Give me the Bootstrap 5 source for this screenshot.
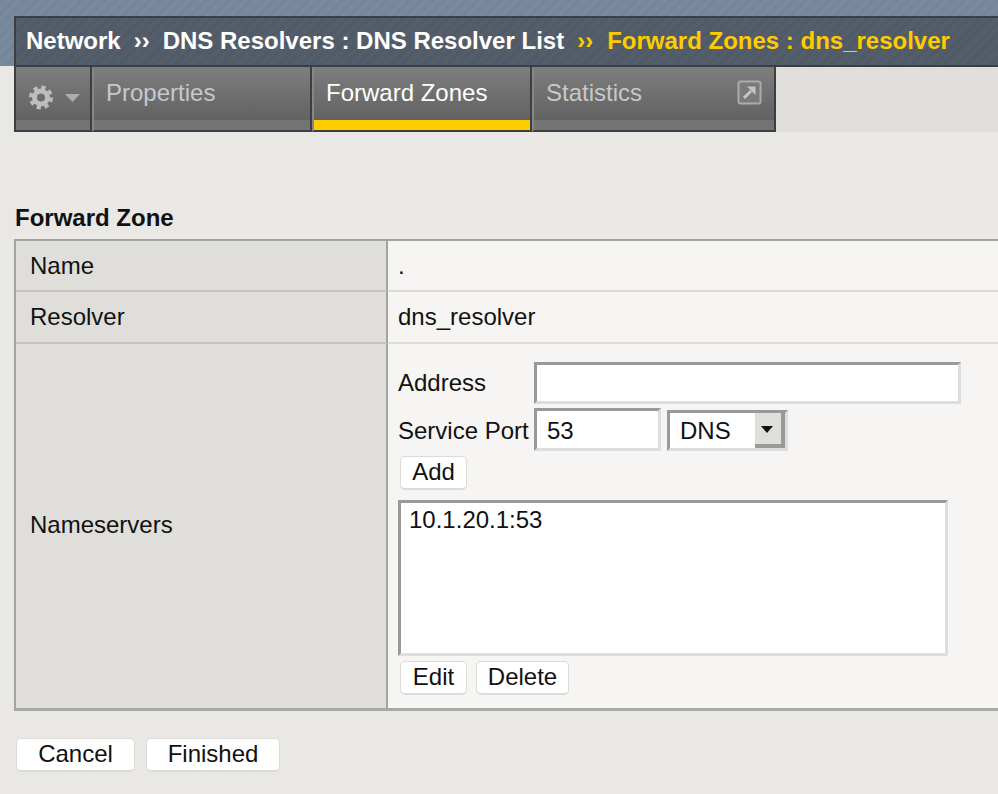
<!DOCTYPE html>
<html lang="en"><head><meta charset="utf-8"><title>Forward Zone</title>
<link href="https://cdn.jsdelivr.net/npm/bootstrap@5.3.0/dist/css/bootstrap.min.css" rel="stylesheet">
<style>
html,body{height:794px;overflow:hidden}
body{background:#e9e8e4;font-family:"Liberation Sans",Arial,sans-serif;font-size:24px;color:#111;line-height:1.2}
.topband{height:66px;padding-top:16px;padding-left:14px;background:repeating-linear-gradient(135deg,#76869a 0 4px,#7a8a9d 4px 8px)}
.crumbs{height:51px;background:repeating-linear-gradient(135deg,#515b67 0 4px,#545e6a 4px 8px);border:2px solid #3b3e42;border-right:0;padding-left:10px;color:#fff;font-weight:700;white-space:nowrap;padding-top:9px}
.sep{margin:0 13px}
.sep.cur{margin-right:14px}
.cur{color:#fc0}
.tabrow{height:65px;margin:1px 0 0 14px;background:#dfdeda}
.tabcell{height:65px;background:linear-gradient(#7e7e7e,#626262 53px,#747474 53px);border-right:2px solid #3b3e42;border-bottom:2px solid #3b3e42;border-left:2px solid #878787;color:#c8c8c8;padding:12px 0 0 12px;position:relative}
.tabgear{width:78px;border-left:2px solid #3b3e42;padding:18px 0 0 13px}
.tab-a{width:220px}
.tab-b{width:220px;color:#fff;background:linear-gradient(#7e7e7e,#626262 53px,#fc0 53px)}
.tab-c{width:244px}
.extico{position:absolute;right:12px;top:13px}
.formtitle{font-weight:700;margin:72px 0 0 15px;height:35px}
.gridbox{margin-left:14px;border-top:2px solid #a3a3a0;border-left:2px solid #a3a3a0;border-bottom:3px solid #a8a8a4}
.lab{width:372px;flex:none;background:#dfdeda;border-right:2px solid #a3a3a0;border-bottom:2px solid #c4c3bf;padding-left:14px}
.val{flex:1;background:#f6f5f3;border-bottom:2px solid #dddcd8;padding-left:10px}
.h-a{height:51px;line-height:49px}
.h-b{height:52px;line-height:49px}
.h-c{height:364px}
.h-c .lab,.h-c .val{border-bottom:0}
.h-c .lab{padding-bottom:2px}
.val-c{padding-top:18px;line-height:1.2}
.insetbox{border:3px solid;border-color:#999 #ddd #ddd #999;background:#fff;border-radius:0;color:#111;font:inherit;box-shadow:none;outline:0;display:block}
.in-addr{width:427px;height:42px;padding:0 10px}
.in-port{width:127px;height:43px;padding:2px 10px 0}
.selbox{width:121px;height:41px;padding-left:10px;line-height:35px;margin-left:6px;margin-top:2px}
.selarrow{width:30px;height:100%;background:#dfdeda;margin-left:auto;position:relative;border-right:4px solid #999;border-bottom:4px solid #999}
.selarrow::after{content:"";position:absolute;left:6px;top:13px;border:6px solid transparent;border-top:7px solid #111;border-bottom:0}
.lbl-addr{width:136px;line-height:42px}
.lbl-port{width:136px;height:43px;line-height:45px;white-space:nowrap}
.fbtn{background:#fff;border:1px solid #dcdbd7;border-bottom-width:2px;border-radius:5px;color:#111;font-size:24px;line-height:1;padding:0 0 2px;height:34px;display:inline-flex;align-items:center;justify-content:center}
.fbtn:hover{background:#fff;color:#111;border-color:#dcdbd7}
.b-add,.b-edit{width:67px}
.b-del{width:93px;margin-left:9px}
.b-add{margin:5px 0 0 2px}
.listbox{width:550px;height:156px;margin-top:10px;padding:3px 8px}
.b-row{margin:5px 0 0 2px}
.footbtns{margin:27px 0 0 16px}
.b-can{width:119px}
.b-fin{width:134px;margin-left:11px}
.caretico{margin:9px 0 0 4px}
</style></head><body>
<div class="topband"><div class="crumbs">Network<span class="sep">››</span>DNS Resolvers : DNS Resolver List<span class="sep cur">››</span><span class="cur">Forward Zones : dns_resolver</span></div></div>
<div class="tabrow d-flex">
 <div class="tabcell tabgear d-flex align-items-start gap-2">
  <svg width="24" height="25" viewBox="0 0 24 24"><circle cx="12" cy="12" r="6.500" fill="none" stroke="#bdbdbd" stroke-width="5"/><circle cx="12" cy="12" r="10" fill="none" stroke="#bdbdbd" stroke-width="4" stroke-dasharray="4.2 3.65"/></svg>
  <svg class="caretico" width="15" height="8" viewBox="0 0 15 8"><path d="M0 0h15L7.500 8z" fill="#adadad"/></svg>
 </div>
 <div class="tabcell tab-a">Properties</div>
 <div class="tabcell tab-b">Forward Zones</div>
 <div class="tabcell tab-c">Statistics
  <svg class="extico" width="25" height="25" viewBox="0 0 25 25"><rect x="1.500" y="1.500" width="22" height="22" rx="2" fill="#7a7a7a" stroke="#ababab" stroke-width="2"/><path d="M7 18 14 11" stroke="#c4c4c4" stroke-width="3" fill="none"/><path d="M10 6.500H18.500V15z" fill="#c4c4c4"/></svg>
 </div>
</div>
<div class="formtitle">Forward Zone</div>
<div class="gridbox">
 <div class="d-flex h-a"><div class="lab">Name</div><div class="val">.</div></div>
 <div class="d-flex h-b"><div class="lab">Resolver</div><div class="val">dns_resolver</div></div>
 <div class="d-flex h-c"><div class="lab d-flex align-items-center">Nameservers</div>
  <div class="val val-c">
   <div class="d-flex"><div class="lbl-addr">Address</div><input class="insetbox in-addr" type="text" aria-label="Address"></div>
   <div class="d-flex mt-1"><div class="lbl-port">Service Port</div><input class="insetbox in-port" type="text" value="53" aria-label="Service Port">
    <div class="insetbox selbox d-flex">DNS<span class="selarrow"></span></div></div>
   <button type="button" class="btn fbtn b-add">Add</button>
   <div class="insetbox listbox">10.1.20.1:53</div>
   <div class="b-row d-flex"><button type="button" class="btn fbtn b-edit">Edit</button><button type="button" class="btn fbtn b-del">Delete</button></div>
  </div>
 </div>
</div>
<div class="footbtns d-flex"><button type="button" class="btn fbtn b-can">Cancel</button><button type="button" class="btn fbtn b-fin">Finished</button></div>
</body></html>
